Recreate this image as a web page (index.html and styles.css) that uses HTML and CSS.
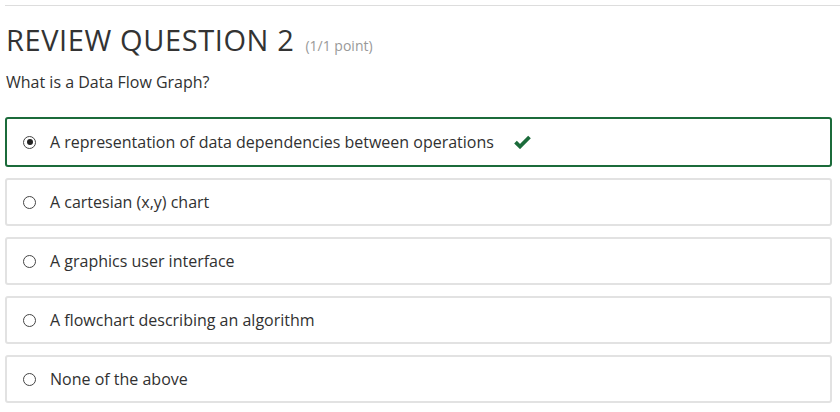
FILE: index.html
```html
<!DOCTYPE html>
<html>
<head>
<meta charset="utf-8">
<link rel="stylesheet" href="styles.css">
</head>
<body>
<div class="page">
  <hr class="rule">
  <div class="content">
    <h2 class="title">REVIEW QUESTION 2 <span class="points">(1/1 point)</span></h2>
    <p class="question">What is a Data Flow Graph?</p>
    <div class="options">
      <label class="option correct">
        <span class="radio checked"></span>
        <span class="label">A representation of data dependencies between operations</span>
        <svg class="check" width="17" height="14" viewBox="0 0 17 14"><path d="M1.5 7.2 L6 11.5 L15.5 2" fill="none" stroke="#1b6b3a" stroke-width="3.8"/></svg>
      </label>
      <label class="option">
        <span class="radio"></span>
        <span class="label">A cartesian (x,y) chart</span>
      </label>
      <label class="option">
        <span class="radio"></span>
        <span class="label">A graphics user interface</span>
      </label>
      <label class="option">
        <span class="radio"></span>
        <span class="label">A flowchart describing an algorithm</span>
      </label>
      <label class="option">
        <span class="radio"></span>
        <span class="label">None of the above</span>
      </label>
    </div>
  </div>
</div>
</body>
</html>
```
FILE: styles.css
```css
html, body {
  margin: 0;
  padding: 0;
  background: #fff;
}
body {
  font-family: "Open Sans", "Noto Sans", sans-serif;
  color: #313131;
}
.page {
  padding-top: 5px;
  padding-left: 5px;
}
.rule {
  margin: 0;
  border: 0;
  border-top: 1px solid #dddddd;
  height: 0;
}
.content {
  width: 827px;
}
.title {
  margin: 16px 0 0 1px;
  font-size: 29px;
  font-weight: 400;
  letter-spacing: 0.6px;
  line-height: 36px;
  color: #333;
}
.points {
  font-size: 14px;
  letter-spacing: 0;
  color: #999;
  margin-left: 3px;
}
.question {
  margin: 7px 0 0 1px;
  font-size: 16px;
  line-height: 22px;
  color: #313131;
}
.options {
  margin-top: 24px;
  display: flex;
  flex-direction: column;
  gap: 11px;
}
.option {
  display: flex;
  align-items: center;
  height: 48px;
  box-sizing: border-box;
  border: 2px solid #e2e2e2;
  border-radius: 3px;
  padding-left: 16px;
  font-size: 16px;
}
.option.correct {
  height: 50px;
  border-color: #1b6b3a;
}
.radio {
  width: 13px;
  height: 13px;
  box-sizing: border-box;
  border: 1.5px solid #444;
  border-radius: 50%;
  margin-right: 14px;
  display: flex;
  align-items: center;
  justify-content: center;
  flex: none;
}
.radio.checked::after {
  content: "";
  width: 6px;
  height: 6px;
  border-radius: 50%;
  background: #222;
}
.label {
  color: #313131;
}
.check {
  margin-left: 20px;
}
```
